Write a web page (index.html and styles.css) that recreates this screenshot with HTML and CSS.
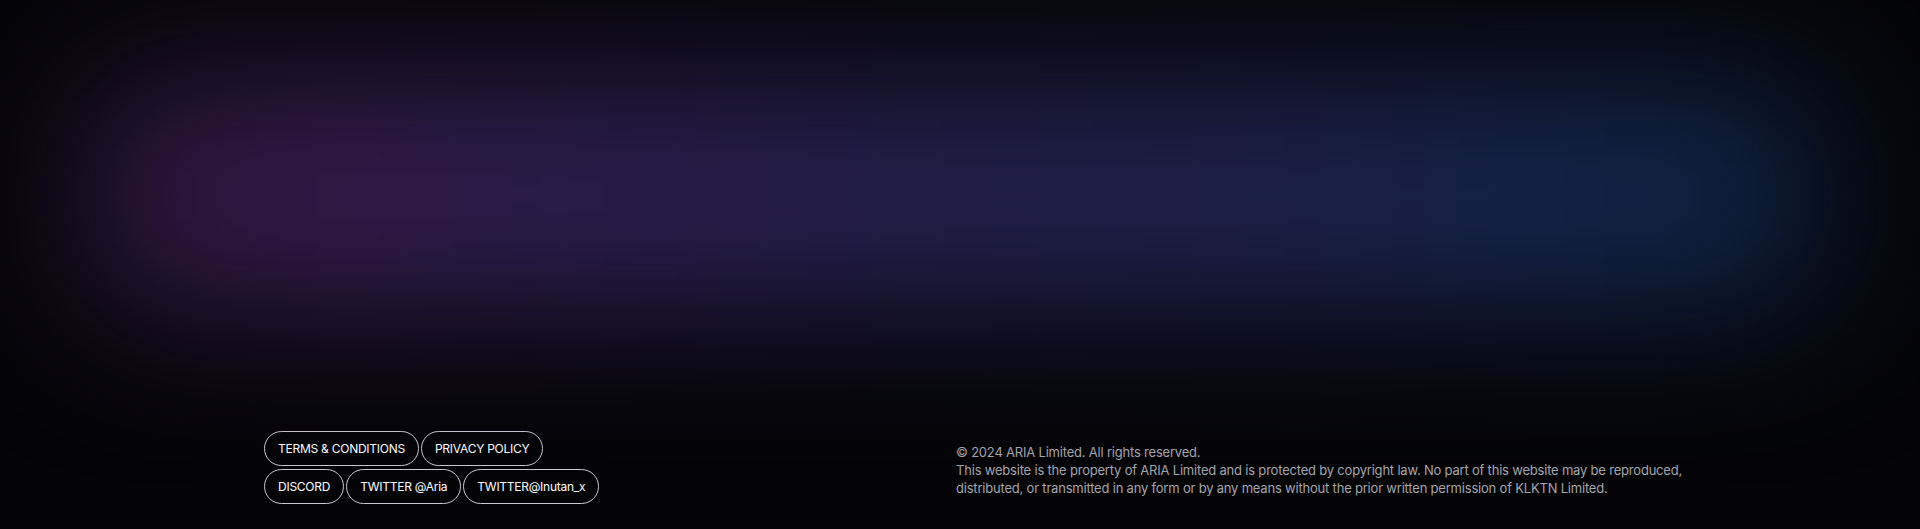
FILE: index.html
```html
<!DOCTYPE html>
<html lang="en">
<head>
<meta charset="utf-8">
<title>ARIA</title>
<link rel="stylesheet" href="styles.css">
</head>
<body>
<div class="page">
  <section class="hero">
    <div class="glow"></div>
  </section>
  <footer class="footer">
    <nav class="links">
      <div class="row">
        <a class="pill" href="#">TERMS &amp; CONDITIONS</a>
        <a class="pill" href="#">PRIVACY POLICY</a>
      </div>
      <div class="row">
        <a class="pill" href="#">DISCORD</a>
        <a class="pill" href="#">TWITTER @Aria</a>
        <a class="pill" href="#">TWITTER@Inutan_x</a>
      </div>
    </nav>
    <div class="legal">
      <p>© 2024 ARIA Limited. All rights reserved.</p>
      <p>This website is the property of ARIA Limited and is protected by copyright law. No part of this website may be reproduced, distributed, or transmitted in any form or by any means without the prior written permission of KLKTN Limited.</p>
    </div>
  </footer>
</div>
</body>
</html>
```

FILE: styles.css
```css
* { box-sizing: border-box; }
html, body { margin: 0; padding: 0; }
body {
  background: #040407;
  font-family: "Inter", "Open Sans", sans-serif;
  color: #fff;
  overflow: hidden;
}
.page {
  width: 1920px;
  height: 529px;
  display: flex;
  flex-direction: column;
}
.hero {
  height: 431px;
  padding: 75px 80px 115px 80px;
  flex: none;
}
.glow {
  height: 100%;
  background: linear-gradient(90deg, #2a1638 0%, #341b4a 14%, #2a1d4c 30%, #221f4a 50%, #1c2149 68%, #132449 85%, #0f223f 95%, #081428 100%);
  filter: blur(72px);
  border-radius: 60px;
}
.footer {
  display: flex;
  padding-left: 264px;
}
.links {
  width: 692px;
  display: flex;
  flex-direction: column;
  gap: 3px;
}
.row {
  display: flex;
  gap: 2px;
}
.pill {
  height: 35px;
  display: inline-flex;
  align-items: center;
  padding: 0 13px;
  border: 1px solid #c9c9d2;
  border-radius: 18px;
  color: #fff;
  text-decoration: none;
  font-size: 12px;
  letter-spacing: -0.25px;
  white-space: nowrap;
}
.legal {
  width: 760px;
  padding-top: 12px;
  color: #a6a6ae;
  font-size: 13px;
  line-height: 18px;
  letter-spacing: -0.2px;
}
.legal p { margin: 0; }
```
